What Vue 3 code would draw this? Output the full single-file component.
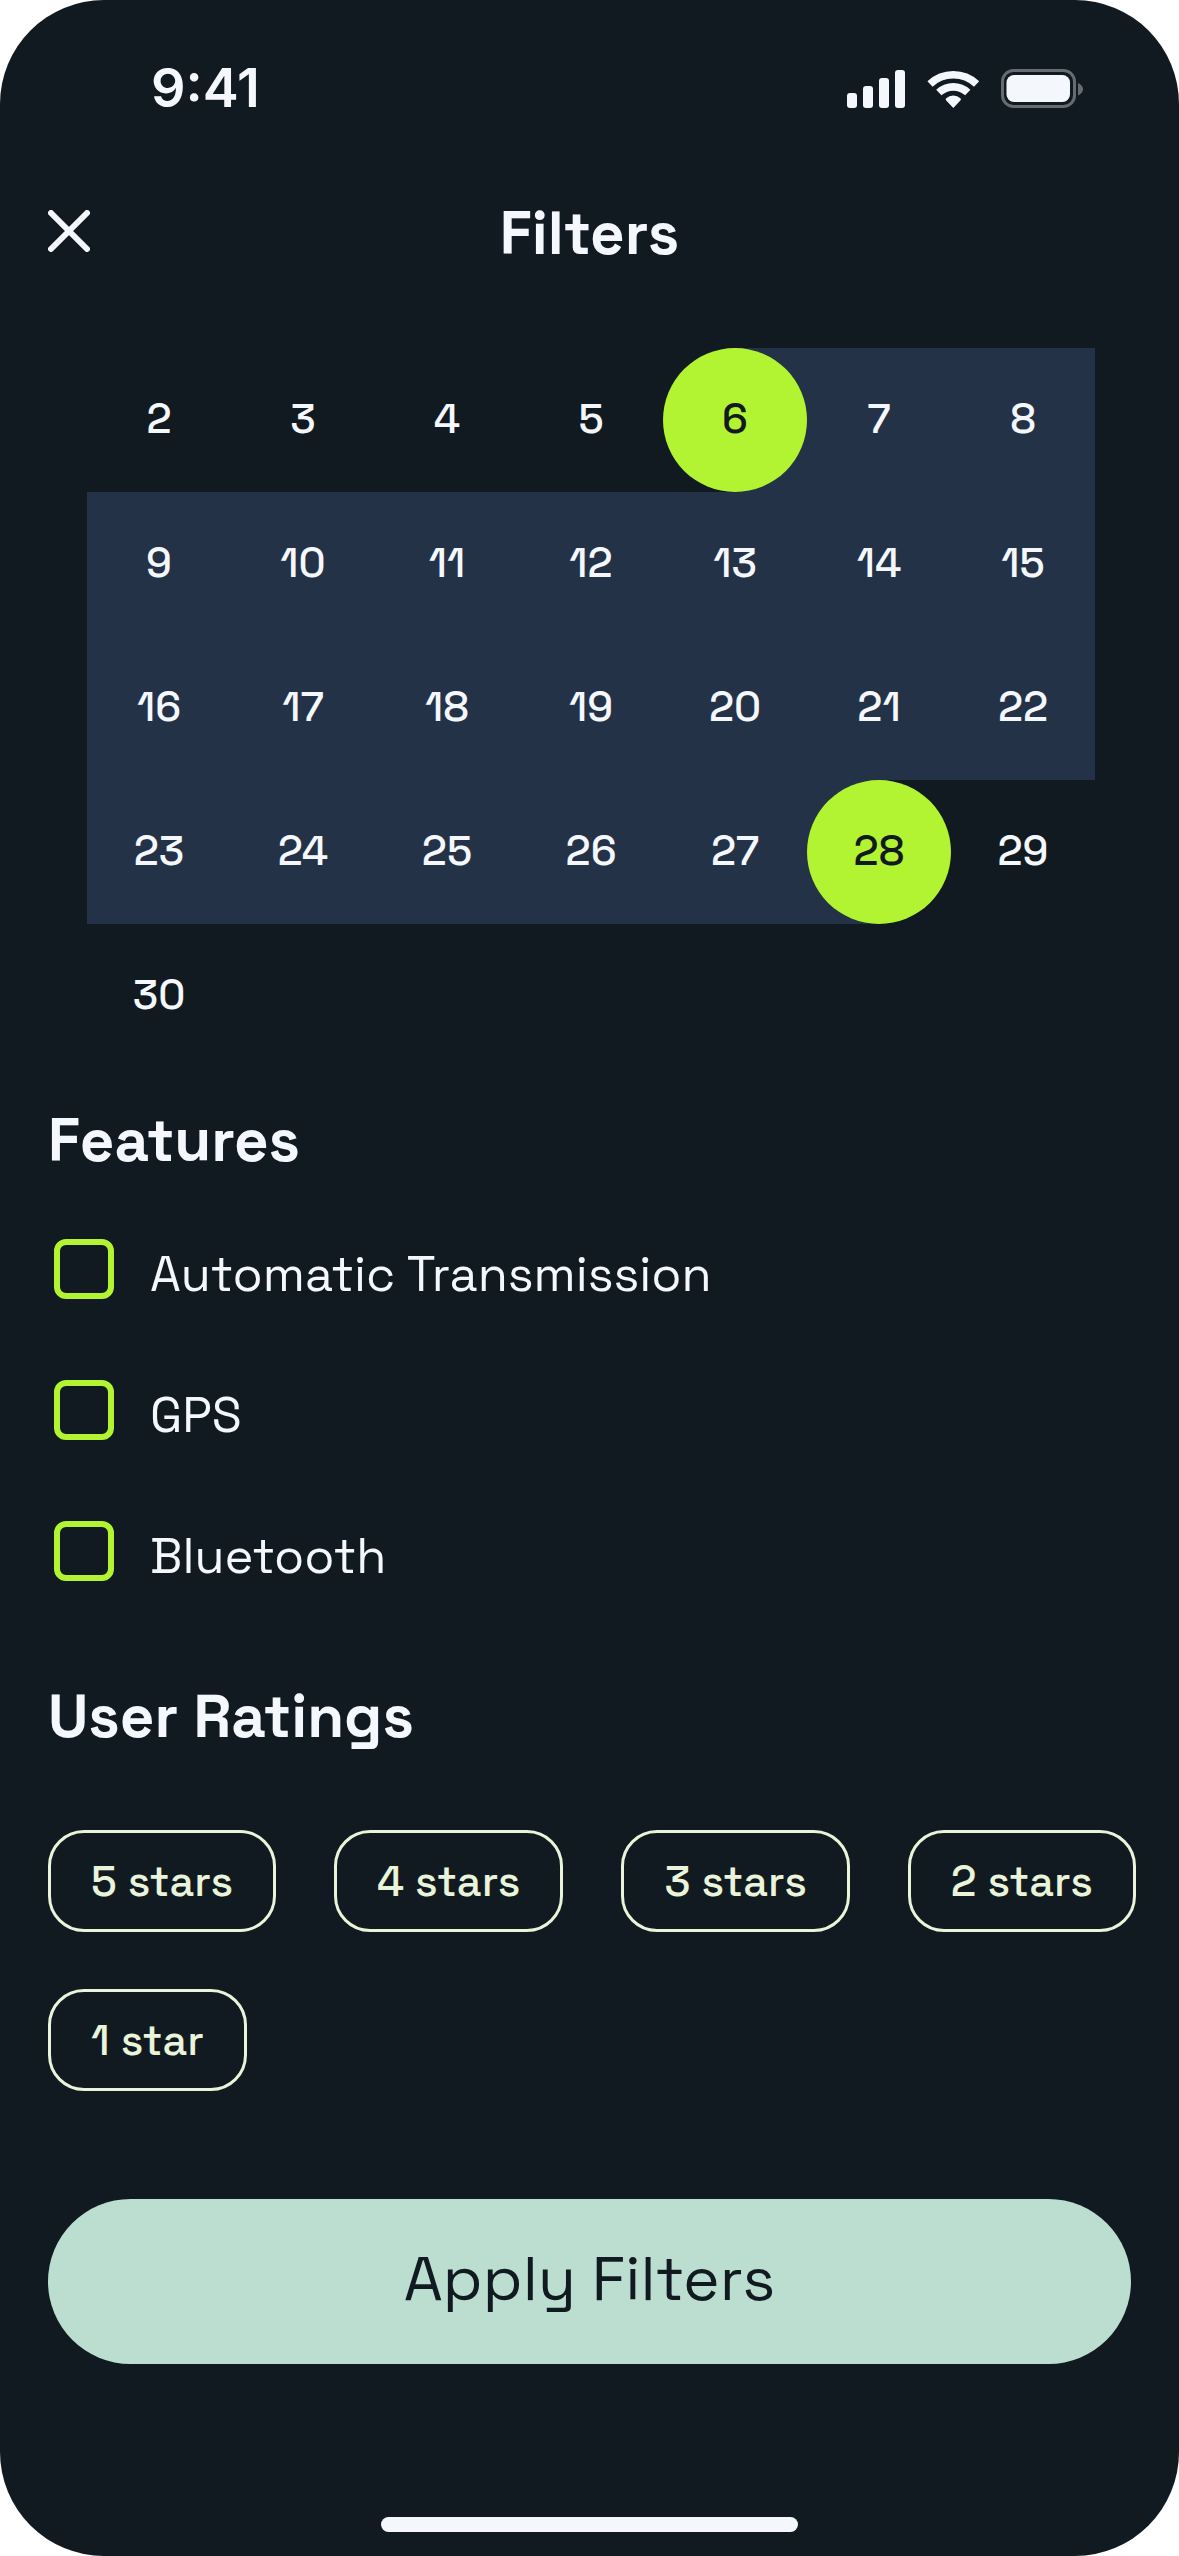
<script setup>
import { ref } from 'vue'

const weeks = [
  [2, 3, 4, 5, 6, 7, 8],
  [9, 10, 11, 12, 13, 14, 15],
  [16, 17, 18, 19, 20, 21, 22],
  [23, 24, 25, 26, 27, 28, 29],
  [30, null, null, null, null, null, null]
]
const start = 6
const end = 28

const features = ref([
  { id: 'automatic', label: 'Automatic Transmission', checked: false },
  { id: 'gps', label: 'GPS', checked: false },
  { id: 'bluetooth', label: 'Bluetooth', checked: false }
])

const ratings = ['5 stars', '4 stars', '3 stars', '2 stars', '1 star']

function dayClass(day) {
  return {
    start: day === start,
    end: day === end,
    within: day > start && day < end
  }
}
</script>

<template>
  <div class="screen">
    <div class="status-bar">
      <span class="time">9:41</span>
      <svg class="status-icons" width="236" height="40" viewBox="0 0 236 40" aria-hidden="true">
        <g fill="#f4f7fb">
          <rect x="0" y="24" width="10" height="15" rx="3" />
          <rect x="16" y="17" width="10" height="22" rx="3" />
          <rect x="32" y="9" width="10" height="30" rx="3" />
          <rect x="48" y="1" width="10" height="38" rx="3" />
        </g>
        <g fill="none" stroke="#f4f7fb" stroke-width="7.600">
          <path d="M83 15A34 34 0 0 1 129.600 15" />
          <path d="M91.800 23.600A21.200 21.200 0 0 1 120.800 23.600" />
        </g>
        <path d="M106.300 39L99 31.200Q98.200 30.200 99.200 29.300A10.600 10.600 0 0 1 113.400 29.300Q114.400 30.200 113.600 31.200Z" fill="#f4f7fb" />
        <rect x="155.500" y="1.500" width="72" height="36" rx="11" fill="none" stroke="#656d70" stroke-width="3" />
        <rect x="159.500" y="6" width="63.500" height="27" rx="7.500" fill="#f4f7fb" />
        <path d="M231 14V26.500C233.500 25.500 236 23 236 20.200S233.500 15 231 14Z" fill="#656d70" />
      </svg>
    </div>

    <header class="title-bar">
      <button class="close" type="button" aria-label="Close">
        <svg width="42" height="42" viewBox="0 0 42 42" aria-hidden="true">
          <path d="M3 3L39 39M39 3L3 39" fill="none" stroke="#f4f7fb" stroke-width="6" stroke-linecap="round" />
        </svg>
      </button>
      <h1>Filters</h1>
    </header>

    <table class="calendar">
      <tbody>
        <tr v-for="(week, i) in weeks" :key="i">
          <td v-for="(day, j) in week" :key="j" :class="day ? dayClass(day) : null">
            <button v-if="day" class="day" type="button">{{ day }}</button>
          </td>
        </tr>
      </tbody>
    </table>

    <section class="features">
      <h2>Features</h2>
      <div class="options">
        <label v-for="f in features" :key="f.id" :for="f.id" class="option">
          <input :id="f.id" v-model="f.checked" type="checkbox" />
          <span class="option-text">{{ f.label }}</span>
        </label>
      </div>
    </section>

    <section class="ratings">
      <h2>User Ratings</h2>
      <div class="chips">
        <button v-for="r in ratings" :key="r" class="chip" type="button">{{ r }}</button>
      </div>
    </section>

    <button class="apply" type="button">Apply Filters</button>

    <div class="home-indicator"></div>
  </div>
</template>

<style>
body {
  background: #ffffff;
}
</style>

<style scoped>
.screen {
  display: flex;
  flex-direction: column;
  box-sizing: border-box;
  min-height: 100vh;
  padding-bottom: 24px;
  border-radius: 104px;
  background: #121a21;
  color: #f4f7fb;
  font-family: "Space Grotesk", Inter, "Liberation Sans", sans-serif;
}

button {
  margin: 0;
  padding: 0;
  border: 0;
  background: none;
  color: inherit;
  font: inherit;
  cursor: pointer;
}

h1,
h2 {
  margin: 0;
  font-size: 60px;
  font-weight: 700;
  line-height: 72px;
}

.status-bar {
  display: flex;
  align-items: center;
  justify-content: space-between;
  height: 178px;
  padding: 0 96px 0 151px;
}

.time {
  padding-bottom: 4px;
  font-family: Inter, sans-serif;
  font-size: 54px;
  font-weight: 600;
}

.title-bar {
  display: grid;
  grid-template-columns: 1fr auto 1fr;
  align-items: center;
  height: 112px;
  padding: 0 48px;
}

.close {
  display: flex;
  justify-self: start;
  padding-bottom: 6px;
}

.calendar {
  table-layout: fixed;
  width: calc(100% - 171px);
  border-collapse: collapse;
  margin: 58px 84px 0 87px;
}

.calendar td {
  height: 144px;
  padding: 0;
}

.day {
  display: block;
  width: 100%;
  height: 144px;
  padding-bottom: 3px;
  border-radius: 50%;
  font-size: 42px;
  font-weight: 500;
}

.within {
  background: #243248;
}

.start {
  background: linear-gradient(to right, transparent 50%, #243248 50%);
}

.end {
  background: linear-gradient(to right, #243248 50%, transparent 50%);
}

.start .day,
.end .day {
  background: #b2f432;
  color: #121a21;
}

.features {
  padding: 37px 48px 0;
}

.options {
  display: flex;
  flex-direction: column;
  gap: 81px;
  padding: 62px 6px 0;
}

.option {
  display: flex;
  align-items: center;
  gap: 36px;
  height: 60px;
  font-size: 49px;
  font-weight: 400;
  line-height: 60px;
}

.option input {
  appearance: none;
  flex: none;
  width: 60px;
  height: 60px;
  margin: 0;
  border: 6px solid #b2f432;
  border-radius: 12px;
}

.option input:checked {
  background: #b2f432;
}

.option-text {
  padding-top: 9px;
}

.ratings {
  padding: 100px 42px 0 48px;
}

.chips {
  display: flex;
  flex-wrap: wrap;
  gap: 57px 58px;
  padding-top: 77px;
}

.chip {
  height: 102px;
  padding: 0 40px;
  border: 3px solid #e9f4da;
  border-radius: 36px;
  color: #e9f4da;
  font-size: 43px;
  font-weight: 500;
}

.apply {
  height: 165px;
  margin: 108px 48px 0;
  padding-bottom: 6px;
  border-radius: 83px;
  background: #bbded0;
  color: #121a21;
  font-size: 62px;
}

.home-indicator {
  align-self: center;
  width: 417px;
  height: 15px;
  margin-top: auto;
  border-radius: 8px;
  background: #f4f7fb;
}
</style>
